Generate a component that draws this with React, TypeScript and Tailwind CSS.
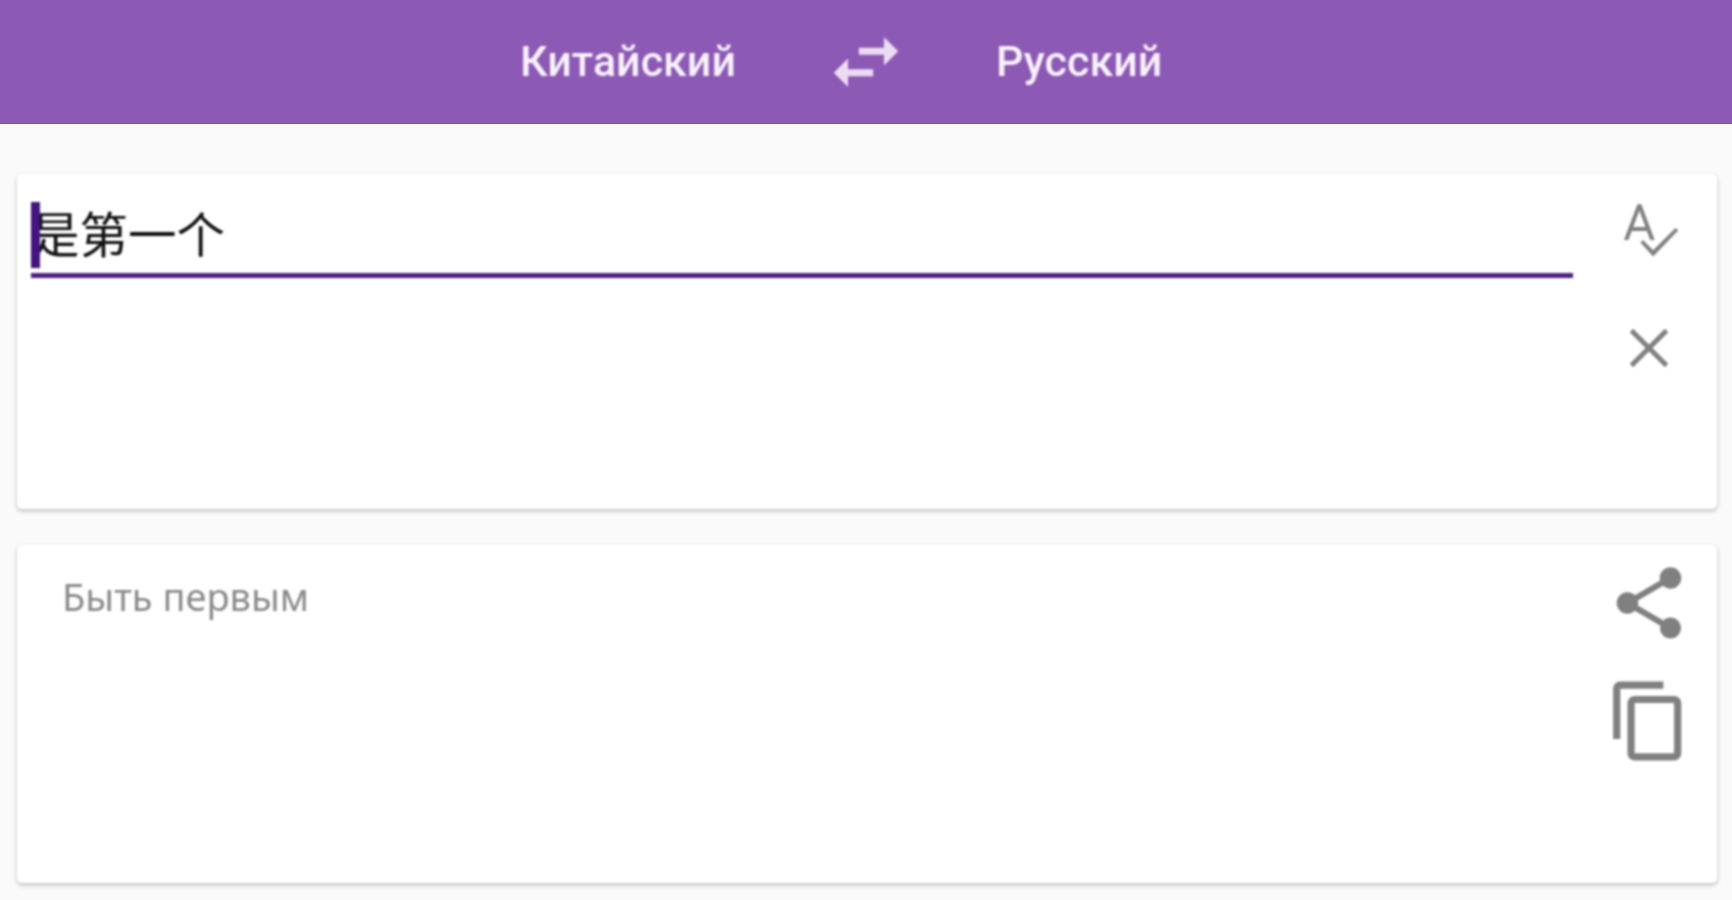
const IconSwap = () => (
  <svg viewBox="0 0 24 24" className="w-[86px] h-[86px] fill-[#ecdcf3] blur-[0.8px]">
    <path d="M6.99 11L3 15l3.99 4v-3H14v-2H6.99v-3zM21 9l-3.99-4v3H10v2h7.01v3L21 9z" />
  </svg>
);

const IconSpellcheck = () => (
  <svg viewBox="0 0 24 24" className="w-[66px] h-[66px] fill-[#808080]">
    <path d="M12.45 16h1.6L9.2 3H7.8L2.9 16h1.6l1.2-3.3h5.5l1.25 3.3zm-6.2-4.7L8.5 5.3l2.2 6H6.25zm15.4.3l-8.15 8.15L9.83 16l-.95.95 4.62 5.05L22.6 12.55l-.95-.95z" />
  </svg>
);

const IconClose = () => (
  <svg viewBox="0 0 24 24" className="w-[68px] h-[68px] stroke-[#808080] fill-none" strokeWidth="1.7">
    <path d="M5.8 5.8L18.2 18.2M18.2 5.8L5.8 18.2" />
  </svg>
);

const IconShare = () => (
  <svg viewBox="0 0 24 24" className="w-[86px] h-[86px] fill-[#808080]">
    <path d="M18 16.08c-.76 0-1.44.3-1.96.77L8.91 12.7c.05-.23.09-.46.09-.7s-.04-.47-.09-.7l7.05-4.11c.54.5 1.25.81 2.04.81 1.66 0 3-1.34 3-3s-1.34-3-3-3-3 1.34-3 3c0 .24.04.47.09.7L8.04 9.81C7.5 9.31 6.79 9 6 9c-1.66 0-3 1.34-3 3s1.34 3 3 3c.79 0 1.5-.31 2.04-.81l7.12 4.16c-.05.21-.08.43-.08.65 0 1.61 1.31 2.92 2.92 2.92 1.61 0 2.92-1.31 2.92-2.92s-1.31-2.92-2.92-2.92z" />
  </svg>
);

const IconCopy = () => (
  <svg viewBox="0 0 24 24" className="w-[86px] h-[86px] fill-[#808080]">
    <path d="M16 1H4c-1.1 0-2 .9-2 2v14h2V3h12V1zm3 4H8c-1.1 0-2 .9-2 2v14c0 1.1.9 2 2 2h11c1.1 0 2-.9 2-2V7c0-1.1-.9-2-2-2zm0 16H8V7h11v14z" />
  </svg>
);

const App = () => {
  return (
    <div className="w-[1732px] h-[900px] overflow-hidden bg-[#fafafa] font-['Roboto',sans-serif]">
      <header className="h-[124px] bg-[#8c59b4] border-b border-[#8450ac] grid grid-cols-[1fr_auto_1fr] gap-x-[87px] items-center">
        <span className="justify-self-end text-[43px] font-medium text-[#f8f1fb] blur-[0.8px]">Китайский</span>
        <IconSwap />
        <span className="text-[43px] font-medium text-[#f8f1fb] blur-[0.8px]">Русский</span>
      </header>

      <main className="flex flex-col pl-[17px] pr-[15px] pt-[50px] gap-[36px] blur-[0.8px]">
        <section className="h-[335px] bg-white rounded-[5px] shadow-[0_2px_4px_rgba(0,0,0,0.26)] flex pl-[14px] pr-[34px]">
          <div className="w-[1542px]">
            <div className="h-[104px] border-b-[5px] border-[#4d2280] flex items-end pb-[9px]">
              <div className="relative font-['Noto_Sans_CJK_SC',sans-serif] text-[48.5px] leading-[64px] text-[#111111]">
                <span className="absolute left-0 top-[2px] w-[9px] h-[66px] bg-[#45157f]" />
                是第一个
              </div>
            </div>
          </div>
          <div className="ml-auto flex flex-col items-center pt-[22px] gap-[52px]">
            <IconSpellcheck />
            <IconClose />
          </div>
        </section>

        <section className="h-[338px] bg-white rounded-[5px] shadow-[0_2px_4px_rgba(0,0,0,0.26)] flex pl-[45px] pr-[25px]">
          <p className="pt-[28px] font-['Noto_Sans',sans-serif] text-[38px] leading-[46px] text-[#8a8a8a]">Быть первым</p>
          <div className="ml-auto flex flex-col pt-[15px] gap-[32px]">
            <IconShare />
            <IconCopy />
          </div>
        </section>
      </main>
    </div>
  );
};

export default App;
